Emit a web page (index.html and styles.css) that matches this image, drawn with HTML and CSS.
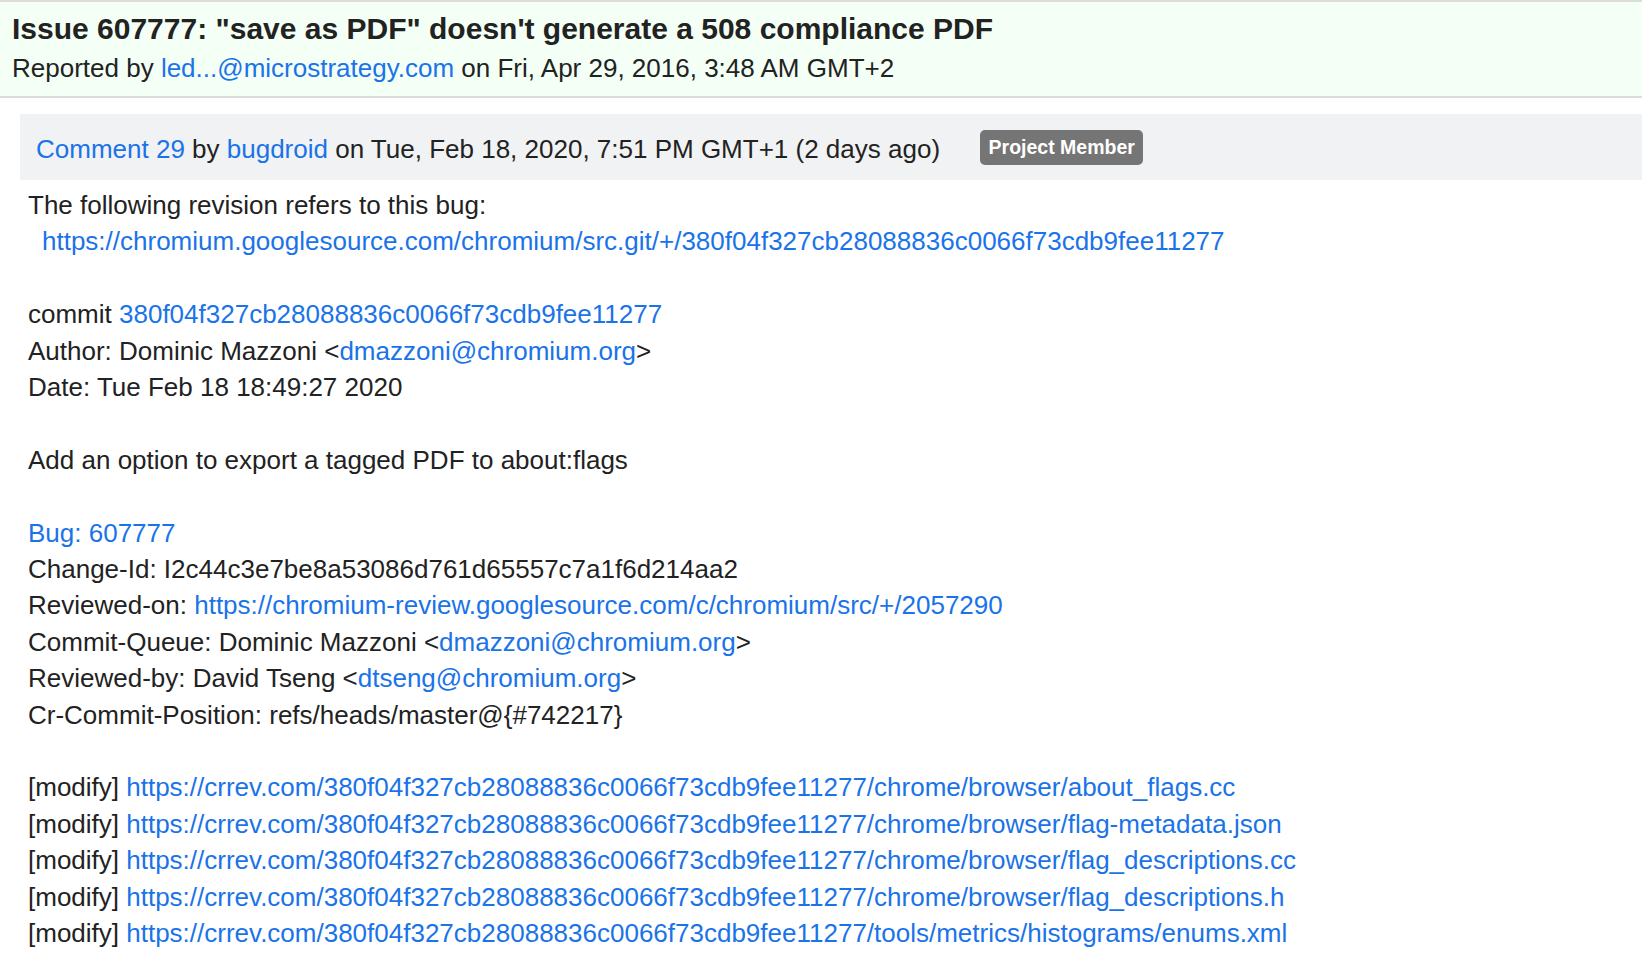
FILE: index.html
```html
<!DOCTYPE html>
<html>
<head>
<meta charset="utf-8">
<link rel="stylesheet" href="styles.css">
</head>
<body>
<div class="issue-header">
  <h1 class="issue-title">Issue 607777: "save as PDF" doesn't generate a 508 compliance PDF</h1>
  <div class="reported">Reported by <a href="#">led...@microstrategy.com</a> on Fri, Apr 29, 2016, 3:48 AM GMT+2</div>
</div>
<div class="comment">
  <div class="comment-header">
    <span class="comment-meta"><a href="#">Comment 29</a> by <a href="#">bugdroid</a> on Tue, Feb 18, 2020, 7:51 PM GMT+1 (2 days ago)</span>
    <span class="badge">Project Member</span>
  </div>
  <div class="comment-body">
    <div class="line">The following revision refers to this bug:</div>
    <div class="line indent"><a href="#">https://chromium.googlesource.com/chromium/src.git/+/380f04f327cb28088836c0066f73cdb9fee11277</a></div>
    <div class="line blank"></div>
    <div class="line">commit <a href="#">380f04f327cb28088836c0066f73cdb9fee11277</a></div>
    <div class="line">Author: Dominic Mazzoni &lt;<a href="#">dmazzoni@chromium.org</a>&gt;</div>
    <div class="line">Date: Tue Feb 18 18:49:27 2020</div>
    <div class="line blank"></div>
    <div class="line">Add an option to export a tagged PDF to about:flags</div>
    <div class="line blank"></div>
    <div class="line"><a href="#">Bug: 607777</a></div>
    <div class="line">Change-Id: I2c44c3e7be8a53086d761d65557c7a1f6d214aa2</div>
    <div class="line">Reviewed-on: <a href="#">https://chromium-review.googlesource.com/c/chromium/src/+/2057290</a></div>
    <div class="line">Commit-Queue: Dominic Mazzoni &lt;<a href="#">dmazzoni@chromium.org</a>&gt;</div>
    <div class="line">Reviewed-by: David Tseng &lt;<a href="#">dtseng@chromium.org</a>&gt;</div>
    <div class="line">Cr-Commit-Position: refs/heads/master@{#742217}</div>
    <div class="line blank"></div>
    <div class="line">[modify] <a href="#">https://crrev.com/380f04f327cb28088836c0066f73cdb9fee11277/chrome/browser/about_flags.cc</a></div>
    <div class="line">[modify] <a href="#">https://crrev.com/380f04f327cb28088836c0066f73cdb9fee11277/chrome/browser/flag-metadata.json</a></div>
    <div class="line">[modify] <a href="#">https://crrev.com/380f04f327cb28088836c0066f73cdb9fee11277/chrome/browser/flag_descriptions.cc</a></div>
    <div class="line">[modify] <a href="#">https://crrev.com/380f04f327cb28088836c0066f73cdb9fee11277/chrome/browser/flag_descriptions.h</a></div>
    <div class="line">[modify] <a href="#">https://crrev.com/380f04f327cb28088836c0066f73cdb9fee11277/tools/metrics/histograms/enums.xml</a></div>
  </div>
</div>
</body>
</html>
```
FILE: styles.css
```css
html, body {
  margin: 0;
  padding: 0;
  background: #ffffff;
}
body {
  font-family: "Liberation Sans", Arial, Helvetica, sans-serif;
  color: #222222;
  font-size: 26px;
}
a {
  color: #1a73e8;
  text-decoration: none;
}
.issue-header {
  background: #f4fff5;
  border-top: 2px solid #dcdcdc;
  border-bottom: 2px solid #dcdcdc;
  padding: 9px 12px 10px 12px;
}
.issue-title {
  margin: 0;
  font-size: 30px;
  font-weight: bold;
  line-height: 36px;
}
.reported {
  margin-top: 3px;
  font-size: 26px;
  line-height: 36px;
}
.comment {
  margin: 16px 0 0 20px;
}
.comment-header {
  background: #f1f2f4;
  height: 66px;
  padding: 0 16px;
  display: flex;
  align-items: center;
}
.comment-meta {
  padding-top: 5px;
}
.badge {
  margin-left: 40px;
  background: #757575;
  color: #ffffff;
  font-weight: bold;
  font-size: 19.5px;
  border-radius: 5px;
  padding: 0 8.5px;
  height: 35px;
  line-height: 35px;
}
.comment-body {
  padding: 7px 8px 0 8px;
}
.line {
  line-height: 36.4px;
  white-space: nowrap;
}
.blank {
  height: 36.4px;
}
.indent {
  padding-left: 14px;
}
```
